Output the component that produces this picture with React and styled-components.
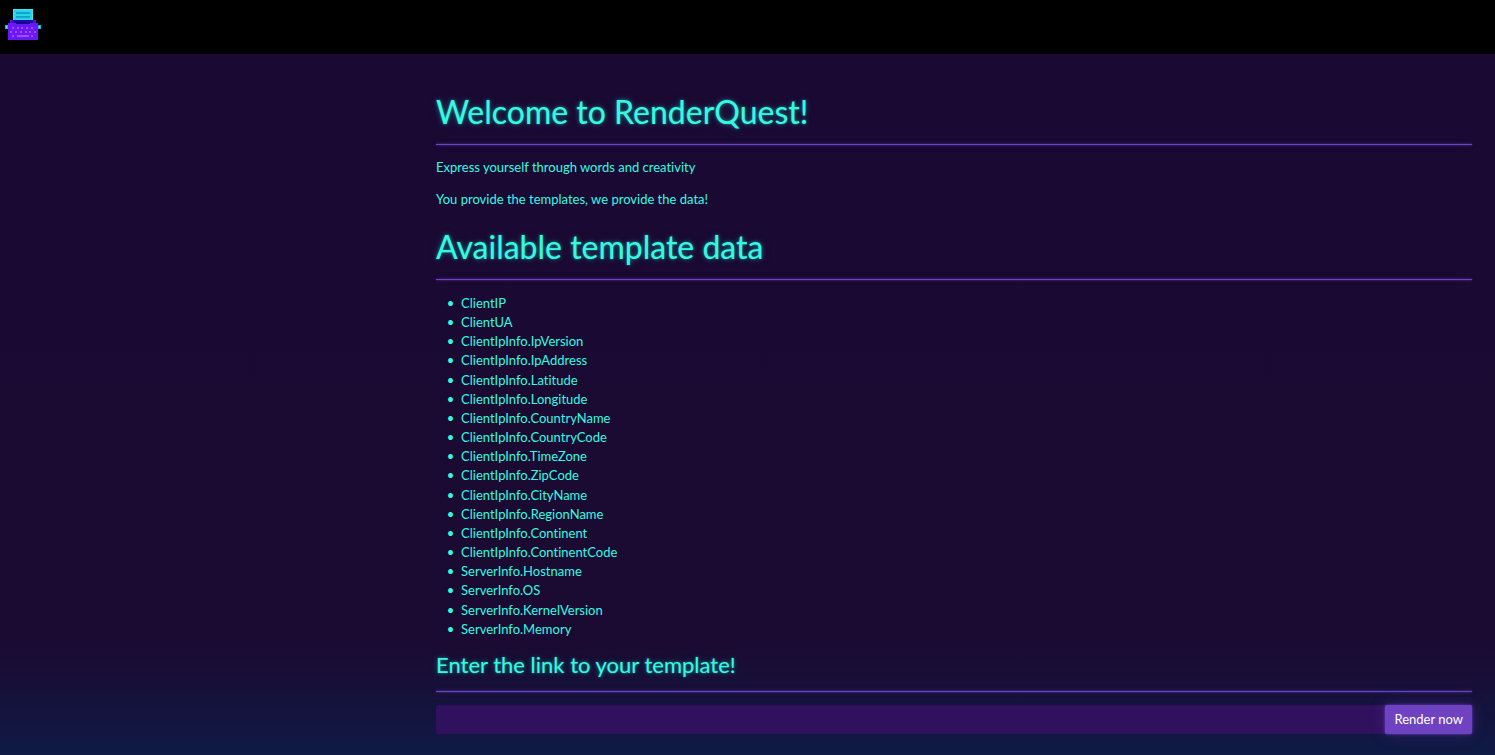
import React from 'react';
import styled, { createGlobalStyle } from 'styled-components';

const GlobalStyle = createGlobalStyle`
  *, *::before, *::after { box-sizing: border-box; }
  html { background: #1a0933; }
  body {
    margin: 0;
    color: #32fbe2;
    font-family: Lato, "Liberation Sans", sans-serif;
    font-size: 13px;
    line-height: 19px;
    font-variant-ligatures: none;
  }
`;

const Page = styled.div`
  min-height: 100vh;
  background: linear-gradient(180deg, #1a0933 0%, #1b0a31 85%, #0f1a45 100%);
`;

const Navbar = styled.header`
  display: flex;
  height: 54px;
  padding: 6px 4px;
  background: #000;
`;

const Brand = styled.a`
  display: block;
  height: 38px;
`;

const Main = styled.main`
  display: grid;
  grid-template-columns: 7fr 17fr;
`;

const Content = styled.div`
  grid-column: 2;
  min-width: 0;
  padding: 38px 23px 21px 0;
`;

const Heading = styled.h1`
  margin: 0;
  font-size: ${(p) => (p.$small ? 22 : 32)}px;
  line-height: ${(p) => (p.$small ? 28 : 40)}px;
  font-weight: 400;
  text-shadow: 0 0 2px rgba(50, 251, 226, 0.4), 0 0 5px rgba(50, 251, 226, 0.4), 0 0 15px rgba(50, 251, 226, 0.1);
`;

const Rule = styled.hr`
  height: 1px;
  margin: 12px 0 13px;
  border: 0;
  background: #6f42c1;
  box-shadow: 0 0 2px rgba(111, 66, 193, 0.9), 0 0 4px rgba(111, 66, 193, 0.4), 0 0 15px rgba(111, 66, 193, 0.1);
`;

const Text = styled.p`
  margin: 0 0 13px;
`;

const Intro = styled.section`
  padding-bottom: 5px;
`;

const List = styled.ul`
  display: grid;
  min-height: 346px;
  margin: 0 0 12px;
  padding: 1px 0 0 25px;
  list-style-type: "•\\00a0\\00a0";
`;

const Form = styled.form`
  display: flex;
`;

const LinkInput = styled.input`
  flex: 1;
  min-width: 0;
  padding: 5px 9px;
  border: 0;
  border-radius: 2px 0 0 2px;
  background: #30115e;
  color: #32fbe2;
  font: inherit;
`;

const Submit = styled.button`
  padding: 5px 9px;
  border: 0;
  border-radius: 2px;
  background: #6f42c1;
  color: #fff;
  font: inherit;
  cursor: pointer;
  box-shadow: 0 0 2px rgba(111, 66, 193, 0.9), 0 0 4px rgba(111, 66, 193, 0.4), 0 0 16px rgba(111, 66, 193, 0.3);
`;

const fields = [
  'ClientIP', 'ClientUA', 'ClientIpInfo.IpVersion', 'ClientIpInfo.IpAddress',
  'ClientIpInfo.Latitude', 'ClientIpInfo.Longitude', 'ClientIpInfo.CountryName',
  'ClientIpInfo.CountryCode', 'ClientIpInfo.TimeZone', 'ClientIpInfo.ZipCode',
  'ClientIpInfo.CityName', 'ClientIpInfo.RegionName', 'ClientIpInfo.Continent',
  'ClientIpInfo.ContinentCode', 'ServerInfo.Hostname', 'ServerInfo.OS',
  'ServerInfo.KernelVersion', 'ServerInfo.Memory',
];

const Typewriter = () => (
  <svg width="38" height="38" viewBox="0 0 38 38" aria-hidden="true">
    <path fill="#3ce8f4" d="M9 3h20v12H9z" />
    <path fill="#2cd2e8" d="M10 4h18v10H10z" />
    <path fill="#12a5cc" d="M12 6h14v2H12zM12 10h14v2H12z" />
    <path fill="#5410d8" d="M6 14h3v3H6zM29 14h3v3H29z" />
    <path fill="#2506a8" d="M9 14h20v3H9z" />
    <path fill="#6a18fa" d="M4 17h30v17H4z" />
    <path fill="#16048c" d="M12 16h14v2H12z" />
    <path fill="#1ab4d8" d="M1 19h3v4H1zM34 19h3v4H34z" />
    <path fill="#5cecf6" d="M2 20h1v2H2zM35 20h1v2H35z" />
    <path
      fill="#a64dff"
      d="M8 21h2v2H8zM13 21h2v2h-2zM17 21h2v2h-2zM22 21h2v2h-2zM27 21h2v2h-2zM6 25h2v2H6zM11 25h2v2h-2zM16 25h2v2h-2zM21 25h2v2h-2zM25 25h2v2h-2zM30 25h2v2h-2zM8 29h2v2H8zM13 29h12v2H13zM27 29h2v2h-2z"
    />
  </svg>
);

export default function App() {
  return (
    <Page>
      <GlobalStyle />
      <Navbar>
        <Brand href="/" aria-label="RenderQuest"><Typewriter /></Brand>
      </Navbar>
      <Main>
        <Content>
          <Intro>
            <Heading>Welcome to RenderQuest!</Heading>
            <Rule />
            <Text>Express yourself through words and creativity</Text>
            <Text>You provide the templates, we provide the data!</Text>
          </Intro>
          <Heading>Available template data</Heading>
          <Rule />
          <List>
            {fields.map((name) => <li key={name}>{name}</li>)}
          </List>
          <Heading as="h2" $small id="link-title">Enter the link to your template!</Heading>
          <Rule />
          <Form>
            <LinkInput type="text" name="page" aria-labelledby="link-title" />
            <Submit type="button">Render now</Submit>
          </Form>
        </Content>
      </Main>
    </Page>
  );
}
